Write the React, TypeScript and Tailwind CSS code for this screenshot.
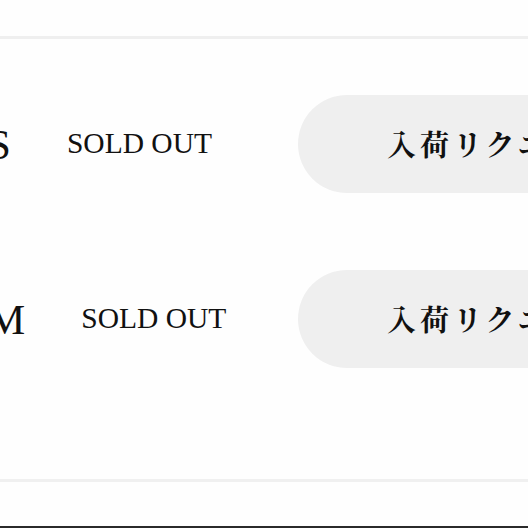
const sizes = [
  { label: "S", top: "mt-[56px]" },
  { label: "M", top: "mt-[77px]" },
];

export default function App() {
  return (
    <div className="flex h-[528px] w-full flex-col overflow-hidden bg-[#fefefe] text-[#111]">
      <div className="h-[36px] shrink-0" />
      <div className="h-[3px] shrink-0 bg-[#efefef]" />
      <div className="flex flex-col">
        {sizes.map((s) => (
          <div key={s.label} className={`flex h-[98px] items-center ${s.top}`}>
            <div className="flex w-[298px] shrink-0 items-center font-['Liberation_Serif',serif]">
              <span className="-ml-[13px] text-[43px] leading-none">{s.label}</span>
              <span className="ml-[56px] text-[29.5px] leading-none">SOLD OUT</span>
            </div>
            <button className="flex h-[98px] w-[420px] shrink-0 items-center rounded-full bg-[#efefef] pl-[89px] font-['Noto_Serif_CJK_JP','Noto_Sans_CJK_JP',serif] text-[29px] font-bold tracking-[4px] whitespace-nowrap">
              入荷リクエスト
            </button>
          </div>
        ))}
      </div>
      <div className="h-[111px] shrink-0" />
      <div className="h-[3px] shrink-0 bg-[#f0f0f0]" />
      <div className="grow" />
      <div className="h-[2px] shrink-0 bg-[#2a2a2a]" />
    </div>
  );
}
